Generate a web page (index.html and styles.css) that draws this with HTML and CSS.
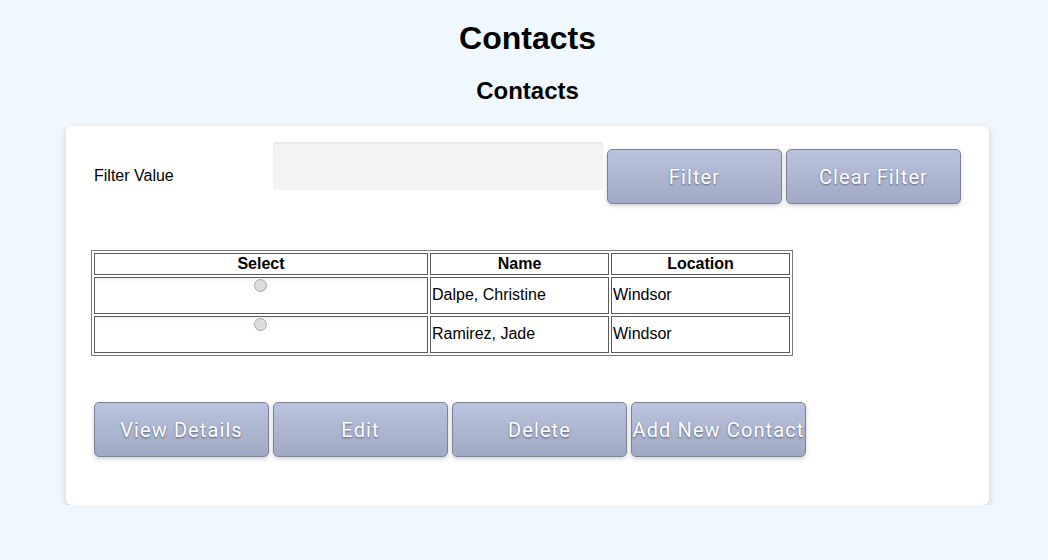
FILE: index.html
```html
<!DOCTYPE html>
<html>
<head>
<meta charset="utf-8">
<link rel="stylesheet" href="styles.css">
</head>
<body>
<h1 class="title">Contacts</h1>
<h2 class="subtitle">Contacts</h2>
<div class="card">
  <div class="filter-row">
    <label class="filter-label">Filter Value</label>
    <div class="filter-input"></div>
    <button class="btn btn-top">Filter</button>
    <button class="btn btn-top">Clear Filter</button>
  </div>
  <table class="grid">
    <thead>
      <tr><th class="col-select">Select</th><th class="col-name">Name</th><th class="col-loc">Location</th></tr>
    </thead>
    <tbody>
      <tr><td class="sel"><div class="sel-box"><span class="radio"></span></div></td><td>Dalpe, Christine</td><td>Windsor</td></tr>
      <tr><td class="sel"><div class="sel-box"><span class="radio"></span></div></td><td>Ramirez, Jade</td><td>Windsor</td></tr>
    </tbody>
  </table>
  <div class="actions">
    <button class="btn">View Details</button>
    <button class="btn">Edit</button>
    <button class="btn">Delete</button>
    <button class="btn">Add New Contact</button>
  </div>
</div>
</body>
</html>
```
FILE: styles.css
```css
html, body {
  margin: 0;
  padding: 0;
  background: #f0f8ff;
  font-family: "Liberation Sans", Arial, sans-serif;
  color: #000;
}
body {
  padding-left: 7px;
}
.title {
  text-align: center;
  font-size: 32px;
  margin: 20px 0 20px;
}
.subtitle {
  text-align: center;
  font-size: 24px;
  margin: 19px 0 21px;
}
.card {
  width: 923px;
  margin: 0 auto;
  box-sizing: border-box;
  background: #fff;
  border-radius: 6px;
  box-shadow: 0 3px 5px 2px rgba(0, 0, 0, 0.1);
  padding: 16px 28px 48px 28px;
}
.filter-row {
  display: flex;
  align-items: flex-start;
  gap: 4px;
}
.filter-label {
  width: 175px;
  font-size: 16px;
  line-height: 18px;
  margin-top: 25px;
}
.filter-input {
  width: 330px;
  height: 48px;
  background: #f4f4f4;
  border-radius: 2px;
  box-shadow: inset 0 2px 2px rgba(0, 0, 0, 0.06);
}
.btn {
  width: 175px;
  height: 55px;
  padding: 0;
  border: 1px solid #7d8396;
  border-radius: 5px;
  background: linear-gradient(#b9c3dd, #a1aac5);
  color: #ffffff;
  font-family: Roboto, "Liberation Sans", sans-serif;
  font-size: 20px;
  letter-spacing: 1.1px;
  text-shadow: 0 1px 2px rgba(50, 60, 90, 0.7);
  box-shadow: 0 2px 4px rgba(0, 0, 0, 0.18);
  white-space: nowrap;
}
.btn-top {
  margin-top: 7px;
}
.grid {
  margin: 46px 0 0 -3px;
  border: 1px solid #7a7a7a;
  border-spacing: 2px;
  border-collapse: separate;
  font-size: 16px;
}
.grid th, .grid td {
  border: 1px solid #5a5a5a;
  padding: 1px;
}
.grid th {
  font-weight: bold;
  text-align: center;
  height: 18px;
  line-height: 18px;
}
.col-select { width: 330px; }
.col-name { width: 175px; }
.col-loc { width: 175px; }
.grid td {
  height: 33px;
  padding: 0 1px 2px 1px;
  line-height: 18px;
  text-align: left;
}
.grid td.sel {
  padding: 0;
  vertical-align: top;
}
.sel-box {
  height: 35px;
  box-shadow: inset 0 3px 3px -1px rgba(0, 0, 0, 0.06);
  display: flex;
  justify-content: center;
  padding-right: 2px;
}
.radio {
  width: 11px;
  height: 11px;
  margin-top: 1px;
  border-radius: 50%;
  background: #dcdcdc;
  border: 1px solid #a9a9a9;
}
.actions {
  display: flex;
  gap: 4px;
  margin-top: 46px;
}
```
